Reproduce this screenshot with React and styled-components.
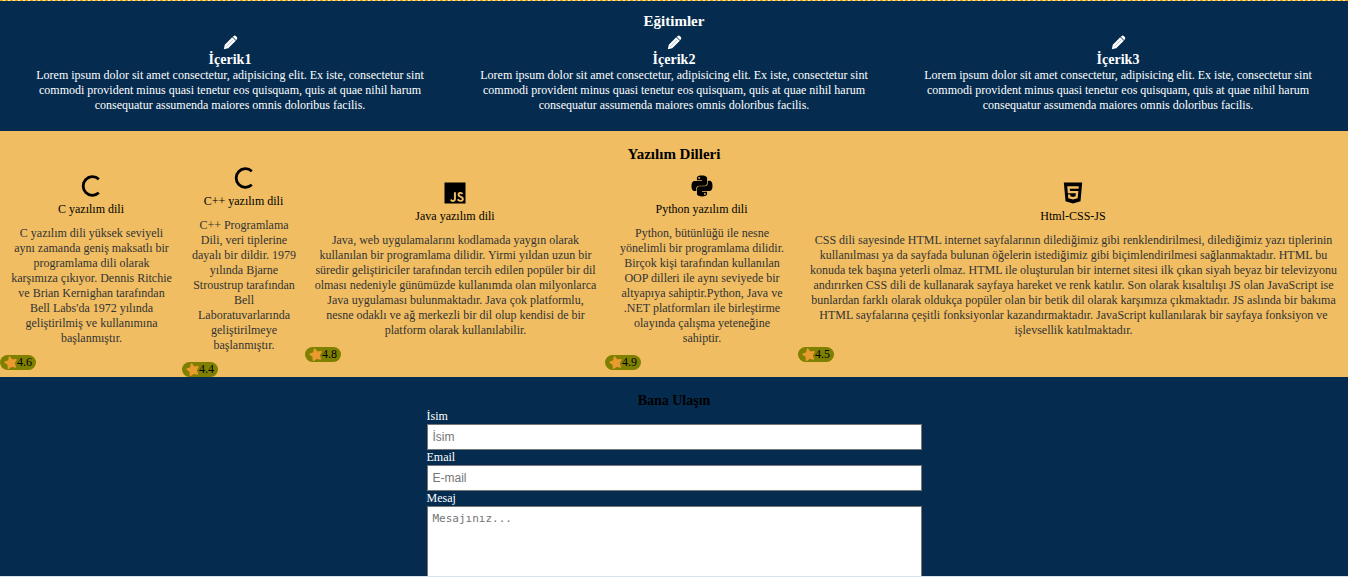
import React from "react";
import styled, { createGlobalStyle } from "styled-components";
import { BiLogoJavascript, BiLogoPython, BiLogoHtml5 } from "react-icons/bi";

const GlobalStyle = createGlobalStyle`
  * { box-sizing: border-box; margin: 0; padding: 0; }
  body {
    font-family: "Liberation Serif", "Times New Roman", serif;
    font-size: 12px;
    line-height: 15px;
    background: #052c4f;
  }
`;

const Page = styled.div`
  height: 100vh;
  display: flex;
  flex-direction: column;
  overflow: hidden;
`;

const DashedRule = styled.div`
  flex: none;
  height: 1px;
  background: repeating-linear-gradient(90deg, #ffa500 0 3px, #fff3dc 3px 5px);
`;

const Section = styled.section`
  flex: none;
  padding-top: ${(p) => p.$top}px;
  padding-bottom: ${(p) => p.$bottom || 0}px;
  background: ${(p) => (p.$tone === "sand" ? "#f0bd62" : "#052c4f")};
  color: ${(p) => (p.$tone === "sand" ? "#000" : "#fff")};
`;

const SectionTitle = styled.h2`
  font-size: ${(p) => (p.$small ? 14 : 15)}px;
  line-height: 16px;
  text-align: center;
  color: ${(p) => p.$color || "inherit"};
`;

const LessonRow = styled.div`
  display: grid;
  grid-template-columns: repeat(3, 1fr);
  padding: 6px 8px 0;
`;

const Lesson = styled.article`
  display: flex;
  flex-direction: column;
  align-items: center;
  padding: 0 16px;
  text-align: center;

  svg { display: block; margin-bottom: 1px; }
`;

const LessonTitle = styled.h3`
  font-size: 14px;
  line-height: 17px;
`;

const LanguageRow = styled.div`
  display: grid;
  grid-template-columns: 182fr 123fr 300fr 193fr 550fr;
  align-items: center;
`;

const Language = styled.article`
  display: flex;
  flex-direction: column;
  align-items: center;
  text-align: center;

  > svg { display: block; margin: 2px 0; }
`;

const LanguageName = styled.h3`
  font-size: 12px;
  font-weight: 400;
`;

const LanguageText = styled.p`
  padding: 9px 8px 9px 9px;
  color: #333;
`;

const Rating = styled.span`
  align-self: flex-start;
  display: flex;
  align-items: center;
  width: 36px;
  height: 15px;
  padding-left: 4px;
  border-radius: 8px;
  background: #808000;
`;

const Form = styled.form`
  display: flex;
  flex-direction: column;
  width: 100%;
  max-width: 495px;
  margin: 0 auto;
`;

const Field = styled.input`
  height: 26px;
  padding: 0 5px;
  border: 1px solid #767676;
  background: #fff;
  font: 12px "Liberation Sans", Arial, sans-serif;
  &::placeholder { color: #757575; }
`;

const Message = styled.textarea`
  height: 160px;
  padding: 4px 5px;
  border: 1px solid #767676;
  background: #fff;
  font: 11px/15px "DejaVu Sans Mono", monospace;
  resize: none;
  &::placeholder { color: #757575; }
`;

const Main = styled.main`
  flex: 1;
  min-height: 0;
  overflow: hidden;
`;

const BottomEdge = styled.div`
  flex: none;
  height: 1px;
  background: #d5e3ee;
`;

const Pencil = () => (
  <svg width="15" height="15" viewBox="0 0 15 15" fill="#fff" aria-hidden="true">
    <path d="M.8 14.2 L1.8 9.8 L9.2 2.2 L12.8 5.8 L5.2 13.2 Z" />
    <path d="M9.8 1.8 L10.8 .9 Q12 .2 13 1.2 L13.8 2 Q14.7 3 14 4.1 L13.2 5.2 Z" />
    <path d="M3.4 11.8 L10 5" stroke="#9cabb8" strokeWidth=".7" />
  </svg>
);

const CLogo = () => (
  <svg width="28" height="28" viewBox="0 0 28 28" aria-hidden="true">
    <path
      d="M21.8 7.2 A9.3 9.3 0 1 0 21.8 20.8"
      fill="none"
      stroke="#000"
      strokeWidth="2.8"
    />
  </svg>
);

const Star = () => (
  <svg width="13" height="13" viewBox="0 0 13 13" aria-hidden="true">
    <path
      d="M5.5 1 L8 4.1 L12 3.8 L10 7.1 L11.4 11 L7.6 10.1 L4.4 12.3 L4.2 8.5 L1 6.2 L4.7 4.9 Z"
      fill="#e99b30"
      stroke="#e99b30"
      strokeWidth="1.4"
      strokeLinejoin="round"
    />
  </svg>
);

const lorem =
  "Lorem ipsum dolor sit amet consectetur, adipisicing elit. Ex iste, consectetur sint commodi provident minus quasi tenetur eos quisquam, quis at quae nihil harum consequatur assumenda maiores omnis doloribus facilis.";

const lessons = ["İçerik1", "İçerik2", "İçerik3"];

const languages = [
  {
    name: "C yazılım dili",
    icon: <CLogo />,
    rating: "4.6",
    text: "C yazılım dili yüksek seviyeli aynı zamanda geniş maksatlı bir programlama dili olarak karşımıza çıkıyor. Dennis Ritchie ve Brian Kernighan tarafından Bell Labs'da 1972 yılında geliştirilmiş ve kullanımına başlanmıştır.",
  },
  {
    name: "C++ yazılım dili",
    icon: <CLogo />,
    rating: "4.4",
    text: "C++ Programlama Dili, veri tiplerine dayalı bir dildir. 1979 yılında Bjarne Stroustrup tarafından Bell Laboratuvarlarında geliştirilmeye başlanmıştır.",
  },
  {
    name: "Java yazılım dili",
    icon: <BiLogoJavascript size={28} />,
    rating: "4.8",
    text: "Java, web uygulamalarını kodlamada yaygın olarak kullanılan bir programlama dilidir. Yirmi yıldan uzun bir süredir geliştiriciler tarafından tercih edilen popüler bir dil olması nedeniyle günümüzde kullanımda olan milyonlarca Java uygulaması bulunmaktadır. Java çok platformlu, nesne odaklı ve ağ merkezli bir dil olup kendisi de bir platform olarak kullanılabilir.",
  },
  {
    name: "Python yazılım dili",
    icon: <BiLogoPython size={28} />,
    rating: "4.9",
    text: "Python, bütünlüğü ile nesne yönelimli bir programlama dilidir. Birçok kişi tarafından kullanılan OOP dilleri ile aynı seviyede bir altyapıya sahiptir.Python, Java ve .NET platformları ile birleştirme olayında çalışma yeteneğine sahiptir.",
  },
  {
    name: "Html-CSS-JS",
    icon: <BiLogoHtml5 size={28} />,
    rating: "4.5",
    text: "CSS dili sayesinde HTML internet sayfalarının dilediğimiz gibi renklendirilmesi, dilediğimiz yazı tiplerinin kullanılması ya da sayfada bulunan öğelerin istediğimiz gibi biçimlendirilmesi sağlanmaktadır. HTML bu konuda tek başına yeterli olmaz. HTML ile oluşturulan bir internet sitesi ilk çıkan siyah beyaz bir televizyonu andırırken CSS dili de kullanarak sayfaya hareket ve renk katılır. Son olarak kısaltılışı JS olan JavaScript ise bunlardan farklı olarak oldukça popüler olan bir betik dil olarak karşımıza çıkmaktadır. JS aslında bir bakıma HTML sayfalarına çeşitli fonksiyonlar kazandırmaktadır. JavaScript kullanılarak bir sayfaya fonksiyon ve işlevsellik katılmaktadır.",
  },
];

export default function App() {
  return (
    <Page>
      <GlobalStyle />
      <DashedRule />
      <Main>
        <Section $top={12} $bottom={18}>
          <SectionTitle>Eğitimler</SectionTitle>
          <LessonRow>
            {lessons.map((title) => (
              <Lesson key={title}>
                <Pencil />
                <LessonTitle>{title}</LessonTitle>
                <p>{lorem}</p>
              </Lesson>
            ))}
          </LessonRow>
        </Section>

        <Section $tone="sand" $top={15}>
          <SectionTitle>Yazılım Dilleri</SectionTitle>
          <LanguageRow>
            {languages.map((item) => (
              <Language key={item.name}>
                {item.icon}
                <LanguageName>{item.name}</LanguageName>
                <LanguageText>{item.text}</LanguageText>
                <Rating>
                  <Star />
                  {item.rating}
                </Rating>
              </Language>
            ))}
          </LanguageRow>
        </Section>

        <Section $top={16}>
          <SectionTitle $small $color="#000">Bana Ulaşın</SectionTitle>
          <Form>
            <label htmlFor="name">İsim</label>
            <Field id="name" type="text" placeholder="İsim" />
            <label htmlFor="email">Email</label>
            <Field id="email" type="email" placeholder="E-mail" />
            <label htmlFor="message">Mesaj</label>
            <Message id="message" placeholder="Mesajınız..." />
          </Form>
        </Section>
      </Main>
      <BottomEdge />
    </Page>
  );
}
